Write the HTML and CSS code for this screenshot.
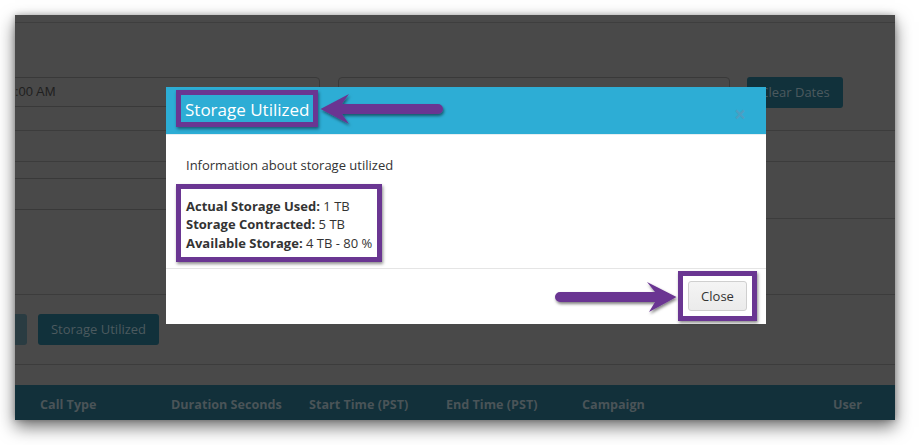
FILE: index.html
```html
<!DOCTYPE html>
<html>
<head>
<meta charset="utf-8">
<link rel="stylesheet" href="styles.css">
</head>
<body>
<div class="frame">
  <div class="strip"></div>
  <div class="daterow">
    <div class="field f1">:00 AM</div>
    <div class="field f2"></div>
    <div class="dim-btn clear">Clear Dates</div>
  </div>
  <div class="rule r1"></div>
  <div class="band"></div>
  <div class="filters">
    <div class="fcol"><div class="field f3"></div></div>
    <div class="fill"></div>
  </div>
  <div class="rule r2"></div>
  <div class="btnrow">
    <div class="dim-btn stub"></div>
    <div class="dim-btn storage">Storage Utilized</div>
  </div>
  <div class="rule r3"></div>
  <div class="thead">
    <span class="c1">Call Type</span>
    <span class="c2">Duration Seconds</span>
    <span class="c3">Start Time (PST)</span>
    <span class="c4">End Time (PST)</span>
    <span class="c5">Campaign</span>
    <span class="c6">User</span>
  </div>

  <div class="modal">
    <div class="modal-header">
      <h4 class="modal-title mark">Storage Utilized</h4>
      <span class="close">×</span>
    </div>
    <div class="modal-body">
      <p class="intro">Information about storage utilized</p>
      <div class="info mark">
        <div><b>Actual Storage Used:</b> 1 TB</div>
        <div><b>Storage Contracted:</b> 5 TB</div>
        <div><b>Available Storage:</b> 4 TB - 80 %</div>
      </div>
    </div>
    <div class="modal-footer">
      <div class="mark closewrap"><button class="btn-close">Close</button></div>
    </div>
  </div>
</div>

<svg class="arrows" width="920" height="445" viewBox="0 0 920 445" xmlns="http://www.w3.org/2000/svg">
  <defs>
    <filter id="sh" x="-10%" y="-30%" width="130%" height="180%">
      <feDropShadow dx="1" dy="2" stdDeviation="1.4" flood-color="#000" flood-opacity="0.5"/>
    </filter>
  </defs>
  <path filter="url(#sh)" fill="#6a3692" d="M320.5,109 L349,94 L342,104 L438,104 A5,5 0 0 1 438,114 L342,114 L349,124 Z"/>
  <path filter="url(#sh)" fill="#6a3692" d="M676.5,297 L647,282 L655,292 L560,292 A5,5 0 0 0 560,302 L655,302 L649,312 Z"/>
</svg>
</body>
</html>
```

FILE: styles.css
```css
html, body {
  margin: 0;
  padding: 0;
  background: #ffffff;
}
body {
  width: 920px;
  height: 445px;
  overflow: hidden;
  position: relative;
  font-family: "Open Sans", "Liberation Sans", sans-serif;
}
.frame {
  position: relative;
  margin: 15px 0 0 15px;
  width: 880px;
  height: 405px;
  background: #494949;
  overflow: hidden;
  box-shadow: 0 7px 16px rgba(0, 0, 0, 0.55), 0 0 6px rgba(0, 0, 0, 0.25);
}
.strip {
  height: 7px;
  border-bottom: 1px solid #3e3e3e;
}
.daterow {
  display: flex;
  align-items: flex-start;
  margin-top: 54px;
  height: 31px;
}
.field {
  box-sizing: border-box;
  height: 30px;
  border: 1px solid #393939;
  border-radius: 4px;
}
.f1 {
  margin-left: -10px;
  width: 315px;
  padding-left: 9px;
  font-family: "Liberation Sans", Arial, sans-serif;
  font-size: 13px;
  line-height: 28px;
  color: #1f1f1f;
}
.f2 {
  margin-left: 18px;
  width: 392px;
}
.dim-btn {
  box-sizing: border-box;
  height: 31px;
  border-radius: 3px;
  background: #11313b;
  color: #4c5a5f;
  font-size: 13px;
  line-height: 31px;
  text-align: center;
}
.clear {
  margin-left: 17px;
  width: 96px;
}
.rule {
  height: 0;
  border-top: 1px solid #3c3c3c;
}
.r1 { margin-top: 22px; }
.band {
  height: 30px;
  border-bottom: 1px solid #3c3c3c;
}
.filters {
  display: flex;
  height: 57px;
}
.fcol {
  width: 320px;
  padding-top: 16px;
}
.f3 {
  margin-left: -10px;
  width: 310px;
  height: 32px;
}
.fill {
  flex: 1;
  border-bottom: 1px solid #3c3c3c;
  box-sizing: border-box;
}
.r2 { margin-top: 75px; }
.btnrow {
  display: flex;
  margin-top: 19px;
  height: 31px;
}
.stub {
  margin-left: -20px;
  width: 32px;
  background: #2a3c42;
}
.storage {
  margin-left: 11px;
  width: 121px;
}
.r3 { margin-top: 19px; }
.thead {
  margin-top: 20px;
  height: 45px;
  box-sizing: border-box;
  background: #12303a;
  padding: 10px 0 0 25px;
  display: flex;
  font-size: 12.6px;
  font-weight: 700;
  line-height: 19px;
  color: #4a5458;
  white-space: nowrap;
}
.c1 { width: 131px; }
.c2 { width: 138px; }
.c3 { width: 137px; }
.c4 { width: 136px; }
.c5 { width: 251px; }

/* modal */
.modal {
  position: absolute;
  left: 151px;
  top: 72px;
  width: 600px;
  background: #ffffff;
  color: #333333;
  font-size: 13px;
}
.modal-header {
  box-sizing: border-box;
  height: 48px;
  background: #2dadd5;
  border-bottom: 1px solid #e6eef1;
  padding: 3px 0 0 10px;
  display: flex;
  align-items: flex-start;
}
.mark {
  border: 5px solid #6a3692;
  box-shadow: 1px 2px 3px rgba(0, 0, 0, 0.45);
}
.modal-title {
  margin: 0;
  height: 25px;
  padding: 2px 4px 0 4px;
  font-size: 17px;
  font-weight: 400;
  line-height: 25px;
  color: #ffffff;
  white-space: nowrap;
}
.close {
  margin-left: auto;
  margin-right: 20px;
  margin-top: 14px;
  font-size: 21px;
  font-weight: 700;
  line-height: 21px;
  color: #4c9ec2;
}
.modal-body {
  padding: 21px 0 6px 10px;
}
.intro {
  margin: 0 0 9px 10px;
  line-height: 19px;
}
.info {
  display: inline-block;
  padding: 8px 5px 5px 5px;
  line-height: 18.4px;
}
.modal-footer {
  border-top: 1px solid #e5e5e5;
  padding: 2px 9px 3px 0;
  display: flex;
  justify-content: flex-end;
}
.closewrap {
  padding: 5px;
  display: flex;
}
.btn-close {
  box-sizing: border-box;
  width: 59px;
  height: 30px;
  padding: 0;
  border: 1px solid #cfcfcf;
  border-radius: 3px;
  background: linear-gradient(#f4f4f4, #ebebeb);
  font-family: "Open Sans", "Liberation Sans", sans-serif;
  font-size: 13px;
  color: #333333;
}

.arrows {
  position: absolute;
  left: 0;
  top: 0;
  pointer-events: none;
}
```
